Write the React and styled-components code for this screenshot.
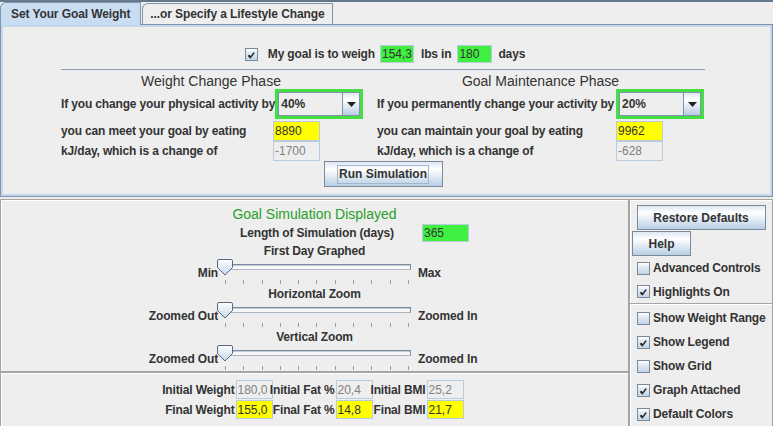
import React from 'react';
import styled, { createGlobalStyle } from 'styled-components';

const GlobalStyle = createGlobalStyle`
    body {
        margin: 0;
        background: #eeeeee;
        font-family: "Liberation Sans", Arial, sans-serif;
        font-size: 12px;
        color: #333333;
    }
`;

const Frame = styled.div`
    width: 773px;
    height: 426px;
    overflow: hidden;
    box-sizing: border-box;
    border-top: 2px solid #66788c;
    background: #eeeeee;
    display: flex;
    flex-direction: column;
`;

const TabStrip = styled.div`
    height: 22px;
    display: flex;
    align-items: flex-end;
    flex: none;
`;

const Tab = styled.div`
    box-sizing: border-box;
    height: ${p => (p.$active ? 23 : 21)}px;
    padding: 0 ${p => p.$pad}px;
    display: flex;
    align-items: center;
    white-space: nowrap;
    font-weight: bold;
    font-size: 12px;
    letter-spacing: -0.1px;
    color: #333;
    background: ${p => (p.$active ? '#c8ddf2' : '#eeeeee')};
    border: 1px solid #8395aa;
    border-bottom: none;
    border-top-left-radius: 6px;
    margin-left: ${p => (p.$active ? 0 : 1)}px;
    position: relative;
    z-index: 1;
    margin-bottom: ${p => (p.$active ? -1 : 0)}px;
`;

const TabPanel = styled.div`
    box-sizing: border-box;
    height: 173px;
    flex: none;
    border: 1px solid #8093a9;
    box-shadow: inset 0 0 0 2px #c4d8ed;
    padding-top: 20px;
    padding-left: 60px;
`;

const TabBody = styled.div`
    width: 644px;
    display: flex;
    flex-direction: column;
`;

const GoalRow = styled.div`
    height: 18px;
    display: flex;
    align-items: center;
    justify-content: center;
    margin-left: 4px;
`;

const Label = styled.span`
    font-weight: bold;
    font-size: 12px;
    letter-spacing: -0.15px;
    color: #333;
    white-space: nowrap;
    margin-left: ${p => p.$ml || 0}px;
    margin-right: ${p => p.$mr || 0}px;
`;

const Field = styled.div`
    box-sizing: border-box;
    width: ${p => p.$w || 47}px;
    height: ${p => p.$h || 20}px;
    border: 1px solid #b8cce0;
    background: ${p => (p.$tone === 'green' ? '#40f040' : p.$tone === 'yellow' ? '#ffff00' : '#eeeeee')};
    color: ${p => (p.$tone ? '#333' : '#808080')};
    font-size: 12px;
    padding: 0 0 0 1px;
    display: flex;
    align-items: center;
    white-space: nowrap;
    overflow: hidden;
`;

const Rule = styled.div`
    margin-top: 6px;
    height: 0;
    border-top: 1px solid #8a9cb0;
`;

const Phases = styled.div`
    display: grid;
    grid-template-columns: 300px 327px;
    column-gap: 16px;
    margin-top: 4px;
`;

const PhaseColumn = styled.div`
    display: flex;
    flex-direction: column;
`;

const PhaseTitle = styled.div`
    height: 15px;
    line-height: 15px;
    text-align: center;
    font-size: 14px;
    color: #333;
`;

const PhaseRow = styled.div`
    display: grid;
    grid-template-columns: 1fr 88px;
    align-items: center;
    height: ${p => p.$h}px;
    margin-top: ${p => p.$mt || 0}px;
`;

const ComboFrame = styled.div`
    box-sizing: border-box;
    width: 88px;
    height: 30px;
    border: 3px solid #44dd44;
    display: flex;
`;

const ComboText = styled.div`
    flex: 1;
    box-sizing: border-box;
    border: 1px solid #8193a6;
    border-right: none;
    background: #eeeeee;
    font-weight: bold;
    font-size: 12px;
    padding-left: 2px;
    display: flex;
    align-items: center;
`;

const ComboArrow = styled.div`
    width: 18px;
    box-sizing: border-box;
    border: 1px solid #8193a6;
    background: linear-gradient(to bottom, #dde8f3 0%, #ffffff 30%, #b8cfe5 100%);
    display: flex;
    align-items: center;
    justify-content: center;
`;

const Button = styled.button`
    box-sizing: border-box;
    width: ${p => p.$w}px;
    height: ${p => p.$h || 24}px;
    align-self: ${p => p.$align || 'center'};
    margin: ${p => p.$m || '0'};
    padding: 0;
    border: 1px solid #7a8a99;
    background: linear-gradient(to bottom, #dde8f3 0%, #ffffff 30%, #b8cfe5 100%);
    font-family: "Liberation Sans", Arial, sans-serif;
    font-weight: bold;
    font-size: 12px;
    color: #333;
    display: flex;
    align-items: center;
    justify-content: center;
`;

const FocusRing = styled.span`
    border: 1px solid #a3b8cc;
    padding: 1px 1px;
    line-height: 15px;
`;

const Bottom = styled.div`
    margin-top: 2px;
    height: 240px;
    flex: none;
    display: flex;
`;

const LeftColumn = styled.div`
    width: 629px;
    display: flex;
    flex-direction: column;
`;

const Etched = styled.div`
    box-sizing: border-box;
    border: 1px solid #a4a4a4;
    box-shadow: inset 1px 1px 0 #ffffff, 1px 1px 0 #ffffff;
    padding: 1px 1px 0 1px;
`;

const SimPanel = styled(Etched)`
    height: 173px;
    display: flex;
    flex-direction: column;
`;

const SimTitle = styled.div`
    margin-top: 4px;
    height: 18px;
    line-height: 18px;
    text-align: center;
    font-size: 14px;
    color: #2a9e2a;
`;

const LengthRow = styled.div`
    height: 19px;
    display: flex;
    align-items: center;
    padding-left: 238px;
`;

const LengthLabel = styled(Label)`
    width: 182px;
`;

const Caption = styled.div`
    box-sizing: border-box;
    height: 17px;
    padding-top: 1px;
    display: flex;
    align-items: center;
    justify-content: center;
    font-weight: bold;
    font-size: 12px;
    letter-spacing: -0.15px;
`;

const SliderRow = styled.div`
    height: 26px;
    display: grid;
    grid-template-columns: 1fr 193px 1fr;
    align-items: center;
`;

const SideLabel = styled(Label)`
    justify-self: ${p => (p.$side === 'left' ? 'end' : 'start')};
    padding-left: ${p => (p.$side === 'left' ? 0 : 7)}px;
    padding-top: 2px;
`;

const Slider = styled.div`
    position: relative;
    height: 26px;
    display: flex;
    flex-direction: column;
`;

const Track = styled.div`
    box-sizing: border-box;
    margin: 5px 0 0 2px;
    height: 6px;
    border: 1px solid #7d8c9c;
    border-bottom-color: #a9b6c4;
    background: #f7f7f7;
    box-shadow: inset 0 1px 0 #c2ccd6;
`;

const Ticks = styled.div`
    margin: 10px 0 0 7px;
    width: 184px;
    height: 4px;
    display: flex;
    justify-content: space-between;
`;

const Tick = styled.span`
    width: 1px;
    height: 4px;
    background: #9c9c9c;
`;

const ThumbMark = styled.svg`
    position: absolute;
    left: -1px;
    top: 0;
`;

const StatsPanel = styled(Etched)`
    flex: 1;
    padding-top: 7px;
    display: flex;
    justify-content: center;
`;

const StatsGrid = styled.div`
    display: grid;
    grid-template-columns: 73px 37px 63px 37px 54px 37px;
    grid-auto-rows: 19px;
    row-gap: 1px;
    align-items: center;
    margin-left: -3px;
`;

const StatLabel = styled(Label)`
    justify-self: end;
    padding-right: 1px;
`;

const ControlsPanel = styled(Etched)`
    width: 144px;
    padding-top: 5px;
    display: flex;
    flex-direction: column;
`;

const CheckRow = styled.div`
    height: ${p => p.$h || 24}px;
    display: flex;
    align-items: center;
    gap: 3px;
    padding-left: 6px;
`;

const Divider = styled.div`
    margin: 0 -1px 1px -1px;
    border-top: 1px solid #a4a4a4;
    border-bottom: 1px solid #ffffff;
`;

const BoxWrap = styled.span`
    box-sizing: border-box;
    width: 13px;
    height: 13px;
    flex: none;
    border: 1px solid #7a8a99;
    background: linear-gradient(to bottom, #ffffff 0%, #dde8f3 40%, #c3d5e8 100%);
    display: flex;
    align-items: center;
    justify-content: center;
`;

function CheckBox({ checked }) {
    return (
        <BoxWrap>
            {checked && (
                <svg width="11" height="11" viewBox="0 0 11 11">
                    <path d="M3 6 L4.5 8.5 L8.2 3.5" fill="none" stroke="#2b2b2b" strokeWidth="1.4" />
                    <path d="M2.8 6.2 L4.1 8.6" fill="none" stroke="#2b2b2b" strokeWidth="2" />
                </svg>
            )}
        </BoxWrap>
    );
}

function Combo({ value }) {
    return (
        <ComboFrame>
            <ComboText>{value}</ComboText>
            <ComboArrow>
                <svg width="9" height="5" viewBox="0 0 9 5">
                    <path d="M0 0 H9 L4.5 5 Z" fill="#222" />
                </svg>
            </ComboArrow>
        </ComboFrame>
    );
}

function SliderControl({ left, right }) {
    return (
        <SliderRow>
            <SideLabel $side="left">{left}</SideLabel>
            <Slider>
                <Track />
                <Ticks>
                    {Array.from({ length: 11 }).map((_, i) => <Tick key={i} />)}
                </Ticks>
                <ThumbMark width="16" height="17" viewBox="0 0 16 17">
                    <defs>
                        <linearGradient id="thumbFill" x1="0" y1="0" x2="0" y2="1">
                            <stop offset="0" stopColor="#ffffff" />
                            <stop offset="1" stopColor="#c3d6ea" />
                        </linearGradient>
                    </defs>
                    <path d="M2 0.5 H14 Q15.5 0.5 15.5 2 V8.5 L8 16 L0.5 8.5 V2 Q0.5 0.5 2 0.5 Z" fill="url(#thumbFill)" stroke="#5a6a7e" />
                </ThumbMark>
            </Slider>
            <SideLabel $side="right">{right}</SideLabel>
        </SliderRow>
    );
}

function App() {
    return (
        <Frame>
            <GlobalStyle />
            <TabStrip>
                <Tab $active $pad={10}>Set Your Goal Weight</Tab>
                <Tab $pad={7}>...or Specify a Lifestyle Change</Tab>
            </TabStrip>
            <TabPanel>
                <TabBody>
                    <GoalRow>
                        <CheckBox checked />
                        <Label $ml={10} $mr={5}>My goal is to weigh</Label>
                        <Field $tone="green" $w={34} $h={18}>154,3</Field>
                        <Label $ml={7} $mr={6}>lbs in</Label>
                        <Field $tone="green" $w={35} $h={18}>180</Field>
                        <Label $ml={6}>days</Label>
                    </GoalRow>
                    <Rule />
                    <Phases>
                        <PhaseColumn>
                            <PhaseTitle>Weight Change Phase</PhaseTitle>
                            <PhaseRow $h={30}>
                                <Label>If you change your physical activity by</Label>
                                <Combo value="40%" />
                            </PhaseRow>
                            <PhaseRow $h={20} $mt={2}>
                                <Label>you can meet your goal by eating</Label>
                                <Field $tone="yellow">8890</Field>
                            </PhaseRow>
                            <PhaseRow $h={20}>
                                <Label>kJ/day, which is a change of</Label>
                                <Field>-1700</Field>
                            </PhaseRow>
                        </PhaseColumn>
                        <PhaseColumn>
                            <PhaseTitle>Goal Maintenance Phase</PhaseTitle>
                            <PhaseRow $h={30}>
                                <Label>If you permanently change your activity by</Label>
                                <Combo value="20%" />
                            </PhaseRow>
                            <PhaseRow $h={20} $mt={2}>
                                <Label>you can maintain your goal by eating</Label>
                                <Field $tone="yellow">9962</Field>
                            </PhaseRow>
                            <PhaseRow $h={20}>
                                <Label>kJ/day, which is a change of</Label>
                                <Field>-628</Field>
                            </PhaseRow>
                        </PhaseColumn>
                    </Phases>
                    <Button $w={119} $h={26}>
                        <FocusRing>Run Simulation</FocusRing>
                    </Button>
                </TabBody>
            </TabPanel>
            <Bottom>
                <LeftColumn>
                    <SimPanel>
                        <SimTitle>Goal Simulation Displayed</SimTitle>
                        <LengthRow>
                            <LengthLabel>Length of Simulation (days)</LengthLabel>
                            <Field $tone="green" $h={18}>365</Field>
                        </LengthRow>
                        <Caption>First Day Graphed</Caption>
                        <SliderControl left="Min" right="Max" />
                        <Caption>Horizontal Zoom</Caption>
                        <SliderControl left="Zoomed Out" right="Zoomed In" />
                        <Caption>Vertical Zoom</Caption>
                        <SliderControl left="Zoomed Out" right="Zoomed In" />
                    </SimPanel>
                    <StatsPanel>
                        <StatsGrid>
                            <StatLabel>Initial Weight</StatLabel>
                            <Field $w={37} $h={19}>180,0</Field>
                            <StatLabel>Initial Fat %</StatLabel>
                            <Field $w={37} $h={19}>20,4</Field>
                            <StatLabel>Initial BMI</StatLabel>
                            <Field $w={37} $h={19}>25,2</Field>
                            <StatLabel>Final Weight </StatLabel>
                            <Field $tone="yellow" $w={37} $h={19}>155,0</Field>
                            <StatLabel>Final Fat %</StatLabel>
                            <Field $tone="yellow" $w={37} $h={19}>14,8</Field>
                            <StatLabel>Final BMI</StatLabel>
                            <Field $tone="yellow" $w={37} $h={19}>21,7</Field>
                        </StatsGrid>
                    </StatsPanel>
                </LeftColumn>
                <ControlsPanel>
                    <Button $w={129} $h={25}>Restore Defaults</Button>
                    <Button $w={59} $h={25} $align="flex-start" $m="1px 0 0 1px">Help</Button>
                    <CheckRow $h={24}><CheckBox /><Label>Advanced Controls</Label></CheckRow>
                    <CheckRow $h={23}><CheckBox checked /><Label>Highlights On</Label></CheckRow>
                    <Divider />
                    <CheckRow><CheckBox /><Label>Show Weight Range</Label></CheckRow>
                    <CheckRow><CheckBox checked /><Label>Show Legend</Label></CheckRow>
                    <CheckRow><CheckBox /><Label>Show Grid</Label></CheckRow>
                    <CheckRow><CheckBox checked /><Label>Graph Attached</Label></CheckRow>
                    <CheckRow><CheckBox checked /><Label>Default Colors</Label></CheckRow>
                </ControlsPanel>
            </Bottom>
        </Frame>
    );
}

export default App;
